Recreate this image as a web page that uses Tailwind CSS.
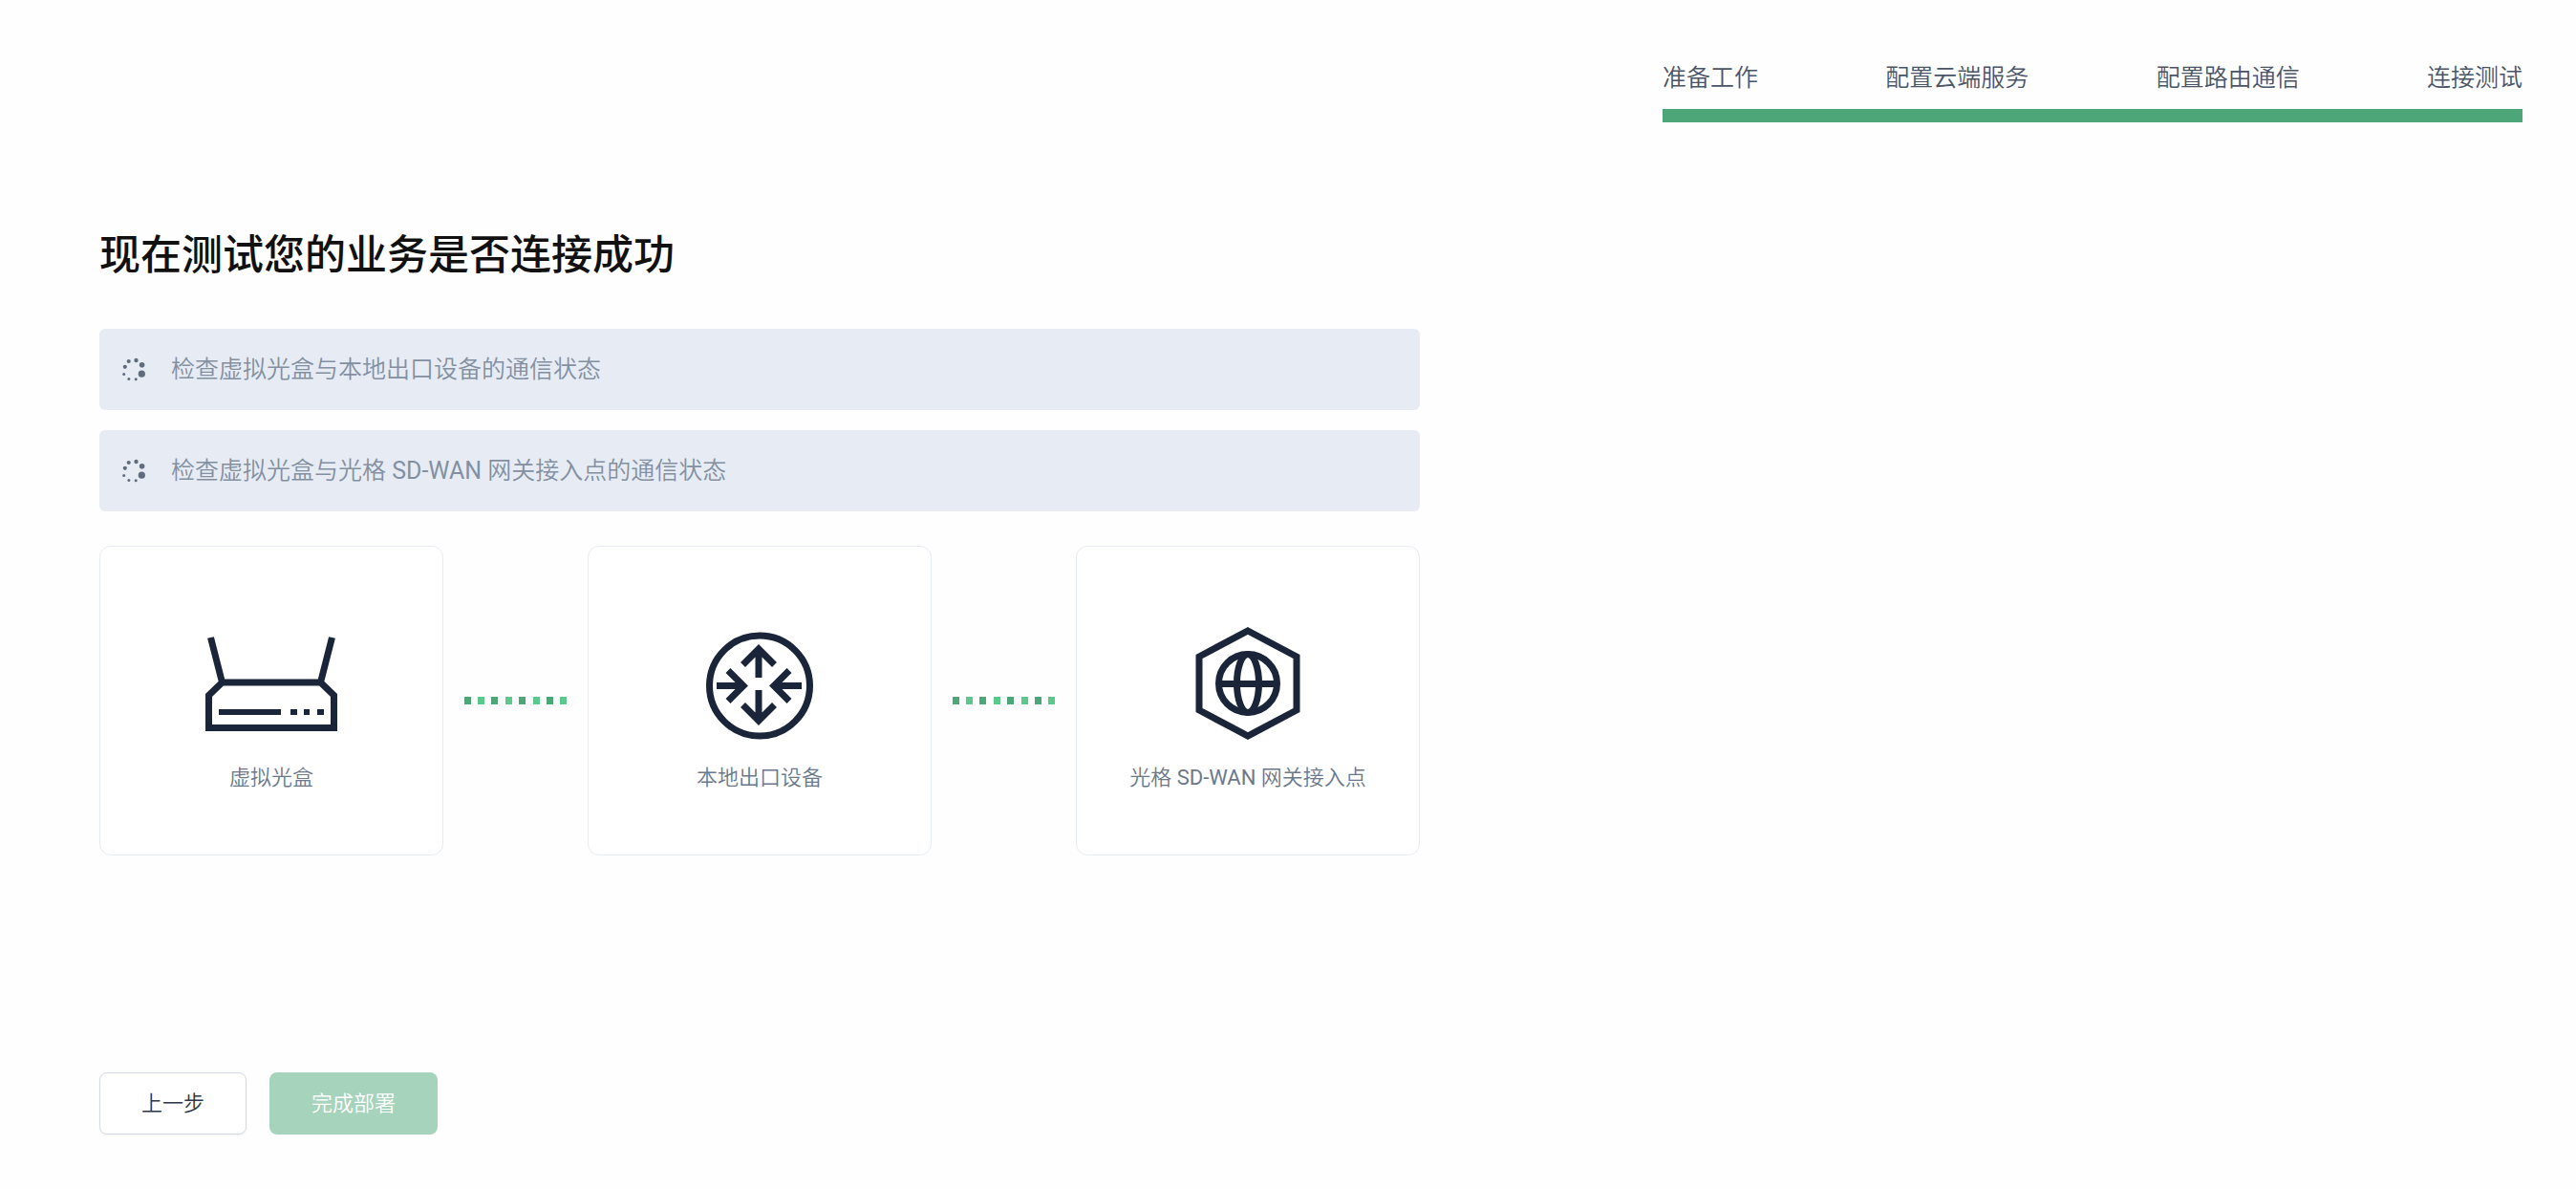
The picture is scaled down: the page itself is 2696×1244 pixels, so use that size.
<!DOCTYPE html>
<html lang="zh-CN">
<head>
<meta charset="utf-8">
<title>连接测试</title>
<script src="https://cdn.jsdelivr.net/npm/@tailwindcss/browser@4"></script>
</head>
<body class="min-h-screen bg-[#fefefe] font-[Roboto,'Noto_Sans_CJK_SC_DemiLight','Noto_Sans_CJK_SC',sans-serif]">
<header class="flex justify-end px-14 pt-16">
  <nav class="w-full max-w-[900px]" aria-label="部署步骤">
    <ol class="flex justify-between text-[25px] leading-9 text-[#4a5568]">
      <li>准备工作</li>
      <li>配置云端服务</li>
      <li>配置路由通信</li>
      <li>连接测试</li>
    </ol>
    <div class="mt-3.5 h-3.5 bg-[#4ca677]"></div>
  </nav>
</header>
<main class="w-full max-w-[1486px] pt-[105px] pb-14 pl-[104px]">
  <h1 class="font-[Roboto,'Noto_Sans_CJK_SC',sans-serif] text-[43px] leading-[68px] font-medium text-[#111111]">现在测试您的业务是否连接成功</h1>
  <div class="mt-[43px] flex flex-col gap-[21px]">
    <div class="flex h-[85px] items-center gap-[25px] rounded-md bg-[#e7ecf4] px-[22px] text-[25px] text-[#8390a2]" role="status">
      <svg class="size-7 shrink-0 fill-[#5f6c7e]" viewBox="0 0 28 28" aria-hidden="true"><circle cx="8.7" cy="5" r="2.1"/><circle cx="16.5" cy="4" r="2.2"/><circle cx="22.6" cy="8.8" r="2.8"/><circle cx="22.3" cy="18.2" r="3.6"/><circle cx="4.8" cy="10.8" r="2.1"/><circle cx="3.7" cy="18.4" r="1.5"/><circle cx="8.9" cy="23.6" r="1.5"/><circle cx="16.2" cy="23.8" r="1.5"/></svg>
      <span>检查虚拟光盒与本地出口设备的通信状态</span>
    </div>
    <div class="flex h-[85px] items-center gap-[25px] rounded-md bg-[#e7ecf4] px-[22px] text-[25px] text-[#8390a2]" role="status">
      <svg class="size-7 shrink-0 fill-[#5f6c7e]" viewBox="0 0 28 28" aria-hidden="true"><circle cx="8.7" cy="5" r="2.1"/><circle cx="16.5" cy="4" r="2.2"/><circle cx="22.6" cy="8.8" r="2.8"/><circle cx="22.3" cy="18.2" r="3.6"/><circle cx="4.8" cy="10.8" r="2.1"/><circle cx="3.7" cy="18.4" r="1.5"/><circle cx="8.9" cy="23.6" r="1.5"/><circle cx="16.2" cy="23.8" r="1.5"/></svg>
      <span>检查虚拟光盒与光格 SD-WAN 网关接入点的通信状态</span>
    </div>
  </div>
  <section class="mt-9 flex items-center text-[22px] leading-8 text-[#6c798a]">
    <div class="flex h-[324px] flex-1 flex-col items-center rounded-xl border border-[#e7ebf2] bg-white pt-[75px]">
      <svg class="h-[136px] w-[144px] fill-none stroke-[#1a2539]" stroke-width="7" viewBox="0 0 144 136" aria-hidden="true"><path d="M20.5 67H123.5L137.5 80.5V114.5H6.5V80.5L20.5 67ZM20.5 67L8.5 20M123.5 67L135.5 20"/><path stroke-width="6" d="M17 98H82M92 98H99M106 98H112M120 98H127"/></svg>
      <p class="mt-[15px]">虚拟光盒</p>
    </div>
    <div class="flex w-[151px] shrink-0 justify-center"><div class="flex w-[108px] justify-between" aria-hidden="true"><i class="h-2 w-[7px] bg-[#4ca677]"></i><i class="h-2 w-[7px] bg-[#5cc98c]"></i><i class="h-2 w-[7px] bg-[#4ca677]"></i><i class="h-2 w-[7px] bg-[#5cc98c]"></i><i class="h-2 w-[7px] bg-[#4ca677]"></i><i class="h-2 w-[7px] bg-[#5cc98c]"></i><i class="h-2 w-[7px] bg-[#4ca677]"></i><i class="h-2 w-[7px] bg-[#5cc98c]"></i></div></div>
    <div class="flex h-[324px] flex-1 flex-col items-center rounded-xl border border-[#e7ebf2] bg-white pt-[75px]">
      <svg class="h-[136px] w-[144px] fill-none stroke-[#1a2539]" stroke-width="7" viewBox="0 0 144 136" aria-hidden="true"><circle cx="72" cy="70.5" r="52.5"/><path d="M71 62V33M54.500 48.500L71 32L87.500 48.500M71 75V106M54.500 90.500L71 107L87.500 90.500M27 70.5H55M39 54.5L55 70.5L39 86.5M116 70.5H87M103 54.5L87 70.5L103 86.5"/></svg>
      <p class="mt-[15px]">本地出口设备</p>
    </div>
    <div class="flex w-[151px] shrink-0 justify-center"><div class="flex w-[108px] justify-between" aria-hidden="true"><i class="h-2 w-[7px] bg-[#4ca677]"></i><i class="h-2 w-[7px] bg-[#5cc98c]"></i><i class="h-2 w-[7px] bg-[#4ca677]"></i><i class="h-2 w-[7px] bg-[#5cc98c]"></i><i class="h-2 w-[7px] bg-[#4ca677]"></i><i class="h-2 w-[7px] bg-[#5cc98c]"></i><i class="h-2 w-[7px] bg-[#4ca677]"></i><i class="h-2 w-[7px] bg-[#5cc98c]"></i></div></div>
    <div class="flex h-[324px] flex-1 flex-col items-center rounded-xl border border-[#e7ebf2] bg-white pt-[75px]">
      <svg class="h-[136px] w-[144px] fill-none stroke-[#1a2539]" stroke-width="7" viewBox="0 0 144 136" aria-hidden="true"><path d="M72 13L123 40V96L72 123L21 96V40Z"/><circle cx="72" cy="68" r="30.5"/><ellipse cx="72" cy="68" rx="11.5" ry="30.5"/><path d="M42 68.5H102"/></svg>
      <p class="mt-[15px]">光格 SD-WAN 网关接入点</p>
    </div>
  </section>
  <div class="mt-[227px] flex gap-6 text-[22px] leading-8">
    <button type="button" class="h-[65px] w-[154px] rounded-lg border border-[#d3dbe6] bg-white text-[#2d3748] shadow-xs">上一步</button>
    <button type="button" disabled class="h-[65px] w-[176px] rounded-lg bg-[#a6d3bb] text-white">完成部署</button>
  </div>
</main>
</body>
</html>
